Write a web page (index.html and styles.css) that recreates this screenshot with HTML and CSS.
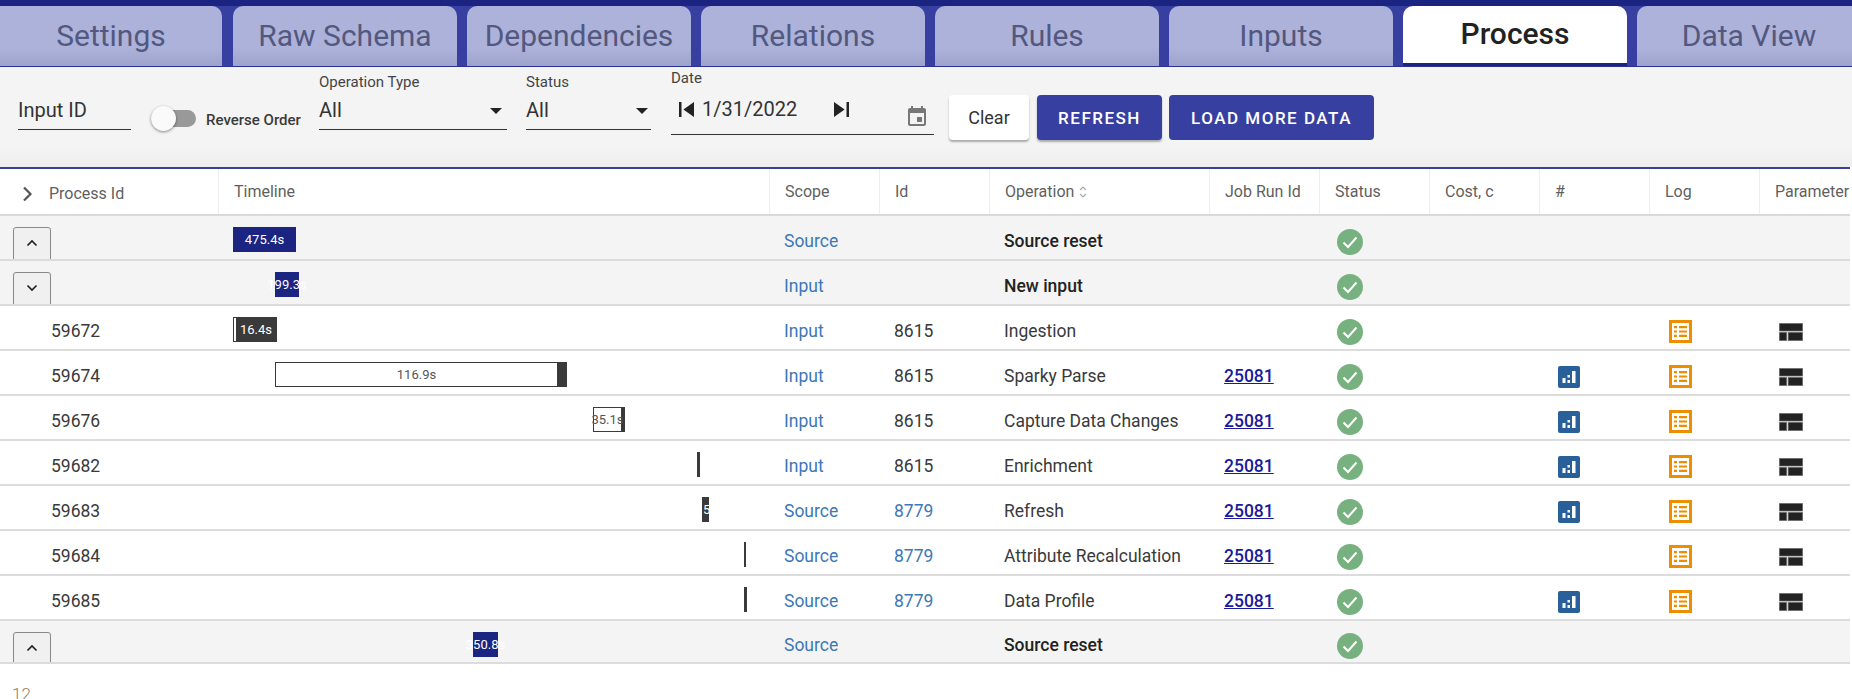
FILE: index.html
```html
<!DOCTYPE html>
<html lang="en">
<head>
  <meta charset="UTF-8" />
  <title>Process</title>
  <link rel="stylesheet" href="styles.css">
</head>
<body>
  <svg class="defs" width="0" height="0">
    <symbol id="i-check" viewBox="0 0 26 26">
      <circle cx="13" cy="13" r="13" fill="#77b17f"/>
      <path d="M6.5 13.5l4.5 4.5 8.5-9.5" fill="none" stroke="#fff" stroke-width="2"/>
    </symbol>
    <symbol id="i-stat" viewBox="0 0 22 22">
      <rect width="22" height="22" rx="2" fill="#2a6099"/>
      <path d="M4.500 12h3v5h-3zM9.500 9h2.500v2.500H9.500zM9.500 14h2.500v3H9.500zM14 5h3.500v12H14z" fill="#fff"/>
    </symbol>
    <symbol id="i-log" viewBox="0 0 23 23">
      <rect x="1.500" y="1.500" width="20" height="20" fill="#fff" stroke="#ee8d00" stroke-width="3"/>
      <path d="M5 6h3v2.200H5zM10 6h8v2.200h-8zM5 10.400h3v2.200H5zM10 10.400h8v2.200h-8zM5 14.800h3V17H5zM10 14.800h8V17h-8z" fill="#ee8d00"/>
    </symbol>
    <symbol id="i-table" viewBox="0 0 24 18">
      <path d="M.4.4h23.200v7.600H.4zM.4 9.500h7.200v8.100H.4zM9.200 9.500h14.400v8.100H9.200z" fill="#222" stroke="#666" stroke-width=".8"/>
    </symbol>
    <symbol id="i-up" viewBox="0 0 12 8">
      <path d="M1.500 6.500L6 2l4.500 4.500" fill="none" stroke="#222" stroke-width="1.700"/>
    </symbol>
    <symbol id="i-down" viewBox="0 0 12 8">
      <path d="M1.500 1.500L6 6l4.500-4.500" fill="none" stroke="#222" stroke-width="1.700"/>
    </symbol>
  </svg>

  <div class="topbar"></div>
  <div class="tabs">
    <div class="tab">Settings</div>
    <div class="tab">Raw Schema</div>
    <div class="tab">Dependencies</div>
    <div class="tab">Relations</div>
    <div class="tab">Rules</div>
    <div class="tab">Inputs</div>
    <div class="tab active">Process</div>
    <div class="tab">Data View</div>
  </div>

  <div class="toolbar">
    <div class="field field-id"><div class="control">Input ID</div></div>
    <div class="toggle"><span class="knob"></span></div>
    <div class="toggle-label">Reverse Order</div>
    <div class="field field-op">
      <label>Operation Type</label>
      <div class="control">All<span class="arrow"></span></div>
    </div>
    <div class="field field-status">
      <label>Status</label>
      <div class="control">All<span class="arrow"></span></div>
    </div>
    <div class="field field-date">
      <label>Date</label>
      <div class="control">
        <svg class="skip" viewBox="6 6 12 12"><path d="M6 6h2v12H6zm3.500 6l8.500 6V6z"/></svg>
        <span class="date-text">1/31/2022</span>
        <svg class="skip skip-next" viewBox="6 6 12 12"><path d="M6 18l8.500-6L6 6v12zM16 6v12h2V6h-2z"/></svg>
        <svg class="calendar" viewBox="3 1 18 20"><path d="M17 12h-5v5h5v-5zM16 1v2H8V1H6v2H5c-1.110 0-1.990.9-1.990 2L3 19c0 1.100.89 2 2 2h14c1.100 0 2-.9 2-2V5c0-1.100-.9-2-2-2h-1V1h-2zm3 18H5V8h14v11z"/></svg>
      </div>
    </div>
    <button class="btn btn-clear">Clear</button>
    <button class="btn btn-primary btn-refresh">REFRESH</button>
    <button class="btn btn-primary btn-load">LOAD MORE DATA</button>
  </div>

  <div class="table">
    <div class="row head">
      <div class="cell first"><svg class="head-chevron" viewBox="0 0 11 16"><path d="M2 1.500L8.500 8 2 14.500" fill="none" stroke="#555" stroke-width="2.200"/></svg>Process Id</div>
      <div class="cell">Timeline</div>
      <div class="cell">Scope</div>
      <div class="cell">Id</div>
      <div class="cell">Operation<svg class="sort" viewBox="0 0 8 14"><path d="M1 5l3-3 3 3M1 9l3 3 3-3" fill="none" stroke="#aaa" stroke-width="1.200"/></svg></div>
      <div class="cell">Job Run Id</div>
      <div class="cell">Status</div>
      <div class="cell">Cost, c</div>
      <div class="cell">#</div>
      <div class="cell">Log</div>
      <div class="cell">Parameter</div>
    </div>

    <div class="row group">
      <div class="cell first"><button class="expand"><svg viewBox="0 0 12 8"><use href="#i-up"/></svg></button></div>
      <div class="cell track"><div class="bar navy" style="margin-left:15px;width:63px"><span>475.4s</span></div></div>
      <div class="cell"><a class="blue">Source</a></div>
      <div class="cell"></div>
      <div class="cell op">Source reset</div>
      <div class="cell"></div>
      <div class="cell"><svg class="ic-check"><use href="#i-check"/></svg></div>
      <div class="cell"></div><div class="cell"></div><div class="cell"></div><div class="cell"></div>
    </div>

    <div class="row group">
      <div class="cell first"><button class="expand"><svg viewBox="0 0 12 8"><use href="#i-down"/></svg></button></div>
      <div class="cell track"><div class="bar navy" style="margin-left:57px;width:24px"><span>199.3s</span></div></div>
      <div class="cell"><a class="blue">Input</a></div>
      <div class="cell"></div>
      <div class="cell op">New input</div>
      <div class="cell"></div>
      <div class="cell"><svg class="ic-check"><use href="#i-check"/></svg></div>
      <div class="cell"></div><div class="cell"></div><div class="cell"></div><div class="cell"></div>
    </div>

    <div class="row">
      <div class="cell first pid">59672</div>
      <div class="cell track"><div class="bar step" style="margin-left:15px;width:44px"><i style="width:2px"></i><span class="on-dark">16.4s</span></div></div>
      <div class="cell"><a class="blue">Input</a></div>
      <div class="cell">8615</div>
      <div class="cell">Ingestion</div>
      <div class="cell"></div>
      <div class="cell"><svg class="ic-check"><use href="#i-check"/></svg></div>
      <div class="cell"></div>
      <div class="cell"></div>
      <div class="cell"><svg class="ic-log"><use href="#i-log"/></svg></div>
      <div class="cell"><svg class="ic-table"><use href="#i-table"/></svg></div>
    </div>

    <div class="row">
      <div class="cell first pid">59674</div>
      <div class="cell track"><div class="bar step" style="margin-left:57px;width:292px"><i style="width:281px"><span>116.9s</span></i></div></div>
      <div class="cell"><a class="blue">Input</a></div>
      <div class="cell">8615</div>
      <div class="cell">Sparky Parse</div>
      <div class="cell"><a class="job">25081</a></div>
      <div class="cell"><svg class="ic-check"><use href="#i-check"/></svg></div>
      <div class="cell"></div>
      <div class="cell"><svg class="ic-stat"><use href="#i-stat"/></svg></div>
      <div class="cell"><svg class="ic-log"><use href="#i-log"/></svg></div>
      <div class="cell"><svg class="ic-table"><use href="#i-table"/></svg></div>
    </div>

    <div class="row">
      <div class="cell first pid">59676</div>
      <div class="cell track"><div class="bar step" style="margin-left:375px;width:32px"><i style="width:27px"><span>35.1s</span></i></div></div>
      <div class="cell"><a class="blue">Input</a></div>
      <div class="cell">8615</div>
      <div class="cell">Capture Data Changes</div>
      <div class="cell"><a class="job">25081</a></div>
      <div class="cell"><svg class="ic-check"><use href="#i-check"/></svg></div>
      <div class="cell"></div>
      <div class="cell"><svg class="ic-stat"><use href="#i-stat"/></svg></div>
      <div class="cell"><svg class="ic-log"><use href="#i-log"/></svg></div>
      <div class="cell"><svg class="ic-table"><use href="#i-table"/></svg></div>
    </div>

    <div class="row">
      <div class="cell first pid">59682</div>
      <div class="cell track"><div class="bar step" style="margin-left:479px;width:3px"></div></div>
      <div class="cell"><a class="blue">Input</a></div>
      <div class="cell">8615</div>
      <div class="cell">Enrichment</div>
      <div class="cell"><a class="job">25081</a></div>
      <div class="cell"><svg class="ic-check"><use href="#i-check"/></svg></div>
      <div class="cell"></div>
      <div class="cell"><svg class="ic-stat"><use href="#i-stat"/></svg></div>
      <div class="cell"><svg class="ic-log"><use href="#i-log"/></svg></div>
      <div class="cell"><svg class="ic-table"><use href="#i-table"/></svg></div>
    </div>

    <div class="row">
      <div class="cell first pid">59683</div>
      <div class="cell track"><div class="bar step" style="margin-left:484px;width:7px"><span class="on-dark">5.9s</span></div></div>
      <div class="cell"><a class="blue">Source</a></div>
      <div class="cell"><a class="blue">8779</a></div>
      <div class="cell">Refresh</div>
      <div class="cell"><a class="job">25081</a></div>
      <div class="cell"><svg class="ic-check"><use href="#i-check"/></svg></div>
      <div class="cell"></div>
      <div class="cell"><svg class="ic-stat"><use href="#i-stat"/></svg></div>
      <div class="cell"><svg class="ic-log"><use href="#i-log"/></svg></div>
      <div class="cell"><svg class="ic-table"><use href="#i-table"/></svg></div>
    </div>

    <div class="row">
      <div class="cell first pid">59684</div>
      <div class="cell track"><div class="bar step" style="margin-left:526px;width:2px"></div></div>
      <div class="cell"><a class="blue">Source</a></div>
      <div class="cell"><a class="blue">8779</a></div>
      <div class="cell">Attribute Recalculation</div>
      <div class="cell"><a class="job">25081</a></div>
      <div class="cell"><svg class="ic-check"><use href="#i-check"/></svg></div>
      <div class="cell"></div>
      <div class="cell"></div>
      <div class="cell"><svg class="ic-log"><use href="#i-log"/></svg></div>
      <div class="cell"><svg class="ic-table"><use href="#i-table"/></svg></div>
    </div>

    <div class="row">
      <div class="cell first pid">59685</div>
      <div class="cell track"><div class="bar step" style="margin-left:526px;width:3px"></div></div>
      <div class="cell"><a class="blue">Source</a></div>
      <div class="cell"><a class="blue">8779</a></div>
      <div class="cell">Data Profile</div>
      <div class="cell"><a class="job">25081</a></div>
      <div class="cell"><svg class="ic-check"><use href="#i-check"/></svg></div>
      <div class="cell"></div>
      <div class="cell"><svg class="ic-stat"><use href="#i-stat"/></svg></div>
      <div class="cell"><svg class="ic-log"><use href="#i-log"/></svg></div>
      <div class="cell"><svg class="ic-table"><use href="#i-table"/></svg></div>
    </div>

    <div class="row group last">
      <div class="cell first"><button class="expand"><svg viewBox="0 0 12 8"><use href="#i-up"/></svg></button></div>
      <div class="cell track"><div class="bar navy" style="margin-left:255px;width:25px"><span>350.8s</span></div></div>
      <div class="cell"><a class="blue">Source</a></div>
      <div class="cell"></div>
      <div class="cell op">Source reset</div>
      <div class="cell"></div>
      <div class="cell"><svg class="ic-check"><use href="#i-check"/></svg></div>
      <div class="cell"></div><div class="cell"></div><div class="cell"></div><div class="cell"></div>
    </div>
  </div>

  <div class="footer-count">12</div>
</body>
</html>
```

FILE: styles.css
```css
* {
  margin: 0;
  padding: 0;
  box-sizing: border-box;
}

html, body {
  height: 100%;
  overflow: hidden;
  font-family: Roboto, "Liberation Sans", sans-serif;
  background-color: #fff;
  color: #3a3a3a;
}

.defs {
  position: absolute;
}

.topbar {
  height: 6px;
  background-color: #1c2481;
}

/* tabs */
.tabs {
  display: flex;
  gap: 10px;
  height: 61px;
  background-color: #3740a1;
  border-bottom: 1px solid #2a3290;
  overflow: hidden;
}

.tab {
  flex: 0 0 224px;
  height: 60px;
  display: flex;
  align-items: center;
  justify-content: center;
  padding-bottom: 2px;
  font-size: 30px;
  color: #53587f;
  background: linear-gradient(#adb2da 70%, #9da3cc);
  border-radius: 10px 10px 0 0;
}

.tab:first-child {
  flex-basis: 222px;
  margin-right: 1px;
  border-top-left-radius: 0;
}

.tab.active {
  color: #222;
  font-weight: 500;
  background: #fff;
  height: 60px;
  border-bottom: 3px solid #1c2481;
}

/* filter bar */
.toolbar {
  display: flex;
  align-items: flex-start;
  height: 100px;
  padding-left: 18px;
  background: linear-gradient(#f4f4f4 80%, #eeeeee);
}

.field {
  display: flex;
  flex-direction: column;
  justify-content: flex-end;
  height: 63px;
}

.field label {
  font-size: 15px;
  color: #444;
  margin-bottom: 6px;
}

.control {
  position: relative;
  display: flex;
  align-items: center;
  height: 33px;
  padding-bottom: 6px;
  font-size: 20px;
  color: #333;
  border-bottom: 1.500px solid #333;
}

.field-id { width: 113px; }

.toggle {
  position: relative;
  width: 45px;
  height: 17px;
  margin: 43px 10px 0 20px;
  background-color: #999;
  border-radius: 9px;
}

.knob {
  position: absolute;
  left: 0;
  top: -4px;
  width: 25px;
  height: 25px;
  background-color: #fafafa;
  border-radius: 50%;
  box-shadow: 0 1px 3px rgba(0, 0, 0, 0.45);
}

.toggle-label {
  width: 93px;
  margin-top: 44px;
  font-size: 15px;
  font-weight: 500;
  white-space: nowrap;
}

.field-op {
  width: 188px;
  margin-left: 20px;
}

.field-op .arrow {
  right: 5px;
}

.field-status {
  width: 125px;
  margin-left: 19px;
}

.field-status .arrow {
  right: 3px;
}

.field-date {
  width: 263px;
  height: 68px;
  margin-left: 20px;
}

.field-date label {
  margin-bottom: 0;
  padding-bottom: 10px;
}

.field-date .control {
  height: 38px;
  padding-bottom: 13px;
}

.arrow {
  position: absolute;
  top: 11px;
  border-left: 6px solid transparent;
  border-right: 6px solid transparent;
  border-top: 6px solid #222;
}

.skip {
  width: 15px;
  height: 15px;
  margin-left: 8px;
  fill: #222;
}

.skip-next {
  margin-left: 37px;
}

.date-text {
  margin-left: 8px;
}

.calendar {
  width: 18px;
  height: 20px;
  margin: 13px 0 0 59px;
  fill: #777;
}

.btn {
  height: 45px;
  margin-top: 28px;
  font-family: inherit;
  font-size: 18px;
  border: 0;
  border-radius: 4px;
}

.btn-clear {
  width: 80px;
  margin-left: 15px;
  color: #333;
  background-color: #fff;
  box-shadow: 0 2px 2px rgba(0, 0, 0, 0.3);
}

.btn-primary {
  color: #fff;
  font-size: 17px;
  font-weight: 500;
  letter-spacing: 1.500px;
  background-color: #3740a1;
}

.btn-refresh {
  width: 125px;
  margin-left: 8px;
  box-shadow: 0 2px 2px rgba(0, 0, 0, 0.3);
}

.btn-load {
  width: 205px;
  margin-left: 7px;
}

/* table */
.table {
  width: 1850px;
  overflow: hidden;
  border-top: 2px solid #3740a1;
}

.row {
  display: grid;
  grid-template-columns: 218px 551px 110px 110px 220px 110px 110px 110px 110px 110px 110px;
  grid-template-rows: minmax(0, 1fr);
  height: 45px;
  border-bottom: 2px solid #dcdcdc;
  overflow: hidden;
  font-size: 17.500px;
  font-weight: 400;
}

.row.head {
  height: 47px;
  border-bottom: 2px solid #d9d9d9;
  font-size: 16px;
  color: #5f5f5f;
}

.row.group {
  background-color: #f4f4f4;
}

.row.last {
  height: 43px;
}

.cell {
  display: flex;
  align-items: center;
  padding: 6px 0 0 15px;
  white-space: nowrap;
  min-height: 0;
}

.cell svg {
  margin-top: 2px;
}

.head .cell {
  padding-top: 0;
  padding-bottom: 1px;
  border-left: 1px solid #eee;
}

.head .cell.first {
  border-left: 0;
  padding-top: 3px;
  padding-bottom: 0;
}

.cell.first {
  padding-left: 0;
}

.pid {
  padding-left: 51px !important;
}

.head-chevron {
  width: 11px;
  height: 16px;
  margin: 0 16px 0 22px;
}

.sort {
  width: 8px;
  height: 14px;
  margin-left: 5px;
}

.op {
  font-weight: 500;
  color: #222;
}

.blue {
  color: #3d78b8;
}

.job {
  color: #1a1a9c;
  font-weight: 500;
  text-decoration: underline;
}

.expand {
  display: flex;
  align-items: center;
  justify-content: center;
  flex: none;
  width: 38px;
  height: 42px;
  margin: 5px 0 0 13px;
  padding-bottom: 12px;
  align-self: flex-start;
  background-color: #f0f0f0;
  border: 1px solid #888;
  border-radius: 3px;
}

.expand svg {
  width: 12px;
  height: 8px;
}

.track {
  padding: 0;
  align-items: flex-start;
}

/* timeline bars: white part is the wait, dark part is the run */
.bar {
  flex: none;
  height: 25px;
  margin-top: 11px;
  display: flex;
  align-items: center;
  justify-content: center;
  font-size: 13px;
}

.bar span {
  white-space: nowrap;
}

.bar.navy {
  background-color: #1c2481;
  color: #fff;
}

.bar.step {
  justify-content: flex-start;
  background-color: #3a3a3a;
  border: 1px solid #3a3a3a;
  color: #555;
}

.bar.step i {
  flex: none;
  height: 100%;
  display: flex;
  align-items: center;
  justify-content: center;
  font-style: normal;
  background-color: #fff;
}

.bar.step > span {
  flex: 1;
  min-width: 0;
  text-align: center;
}

.on-dark {
  color: #fff;
}

.ic-check {
  width: 26px;
  height: 26px;
  margin-left: 3px;
}

.ic-stat {
  width: 22px;
  height: 22px;
  margin-left: 4px;
}

.ic-log {
  width: 23px;
  height: 23px;
  margin-left: 5px;
}

.ic-table {
  width: 24px;
  height: 18px;
  margin-left: 5px;
}

.footer-count {
  margin: 20px 0 0 12px;
  font-size: 17px;
  font-weight: 300;
  color: #9a7a68;
}
```
